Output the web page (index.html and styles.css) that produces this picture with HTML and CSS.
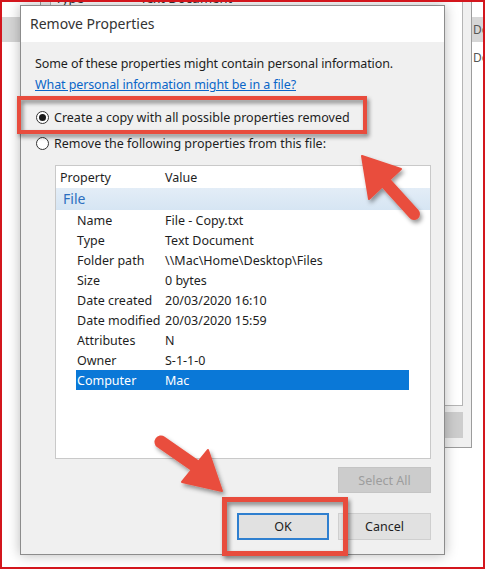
FILE: index.html
```html
<!DOCTYPE html>
<html lang="en">
<head>
  <meta charset="utf-8" />
  <meta name="viewport" content="width=device-width, initial-scale=1" />
  <title>Remove Properties</title>
  <link rel="stylesheet" href="styles.css">
</head>
<body>
  <div class="screen">
    <!-- windows lying behind the dialog -->
    <div class="far-band"></div>
    <div class="far-text far-text-1">Do</div>
    <div class="far-text far-text-2">Do</div>
    <div class="behind">
      <div class="behind-list">
        <div class="behind-row"><span>Type</span><span>Text Document</span></div>
      </div>
      <div class="behind-btn"></div>
    </div>

    <div class="dialog">
      <div class="titlebar">Remove Properties</div>
      <div class="content">
        <p class="intro">Some of these properties might contain personal information.<br>
          <a href="#">What personal information might be in a file?</a></p>

        <div class="radio"><span class="dot checked"></span>Create a copy with all possible properties removed</div>
        <div class="radio"><span class="dot"></span>Remove the following properties from this file:</div>

        <div class="listbox">
          <div class="list-head"><span>Property</span><span>Value</span></div>
          <div class="group">File</div>
          <div class="item"><span>Name</span><span>File - Copy.txt</span></div>
          <div class="item"><span>Type</span><span>Text Document</span></div>
          <div class="item"><span>Folder path</span><span>\\Mac\Home\Desktop\Files</span></div>
          <div class="item"><span>Size</span><span>0 bytes</span></div>
          <div class="item"><span>Date created</span><span>20/03/2020 16:10</span></div>
          <div class="item"><span>Date modified</span><span>20/03/2020 15:59</span></div>
          <div class="item"><span>Attributes</span><span>N</span></div>
          <div class="item"><span>Owner</span><span>S-1-1-0</span></div>
          <div class="item selected"><span>Computer</span><span>Mac</span></div>
        </div>

        <div class="btn-row select-row">
          <button class="btn disabled">Select All</button>
        </div>
        <div class="btn-row action-row">
          <button class="btn default">OK</button>
          <button class="btn">Cancel</button>
        </div>
      </div>
    </div>

    <!-- red annotations -->
    <div class="mark mark-radio"></div>
    <div class="mark mark-ok"></div>
    <svg class="arrows" width="485" height="569" viewBox="0 0 485 569">
      <defs>
        <filter id="shade" x="-20%" y="-20%" width="140%" height="140%">
          <feDropShadow dx="2" dy="3" stdDeviation="2" flood-color="#000" flood-opacity="0.4" />
        </filter>
      </defs>
      <g filter="url(#shade)" fill="#e94e3e" stroke="#e94e3e" stroke-linecap="round" stroke-linejoin="round">
        <line x1="385" y1="182" x2="414" y2="214" stroke-width="12" />
        <polygon points="362,156 401,169 369,199" stroke-width="2" />
        <line x1="197" y1="467" x2="161" y2="442" stroke-width="13" />
        <polygon points="222,491 208,450 182,482" stroke-width="2" />
      </g>
    </svg>
  </div>
</body>
</html>
```

FILE: styles.css
```css
body {
  margin: 0;
  background: #fff;
  font-family: "Noto Sans", sans-serif;
  color: #1e1e1e;
}
.screen {
  position: relative;
  width: 485px;
  height: 569px;
  overflow: hidden;
  background: #fff;
}
/* red frame round the whole screenshot */
.screen::after {
  content: "";
  position: absolute;
  inset: 0;
  border: 2px solid #d3161d;
  pointer-events: none;
}

/* background windows */
.far-band {
  position: absolute;
  left: 0;
  right: 0;
  top: 17px;
  height: 25px;
  background: #d6d6d6;
}
.far-text {
  position: absolute;
  left: 473px;
  font-size: 12px;
  color: #555;
}
.far-text-1 { top: 21px; }
.far-text-2 { top: 49px; }
.behind {
  position: absolute;
  left: 40px;
  top: -200px;
  width: 432px;
  height: 648px;
  box-sizing: border-box;
  background: #f0f0f0;
  border: 1px solid #9c9c9c;
}
.behind-list {
  position: absolute;
  left: 9px;
  right: 8px;
  top: 0;
  height: 603px;
  background: #fff;
  border: 1px solid #b5b5b5;
}
.behind-row {
  position: absolute;
  left: 4px;
  top: 187px;
  display: flex;
  gap: 56px;
  font-size: 13px;
  color: #333;
}
.behind-btn {
  position: absolute;
  right: 8px;
  top: 611px;
  width: 80px;
  height: 26px;
  background: #cdcdcd;
}

/* dialog */
.dialog {
  position: absolute;
  left: 20px;
  top: 5px;
  width: 425px;
  height: 550px;
  box-sizing: border-box;
  border: 1px solid #8c8c8c;
  background: #f0f0f0;
  box-shadow: 0 0 12px rgba(0,0,0,0.28);
  display: flex;
  flex-direction: column;
}
.titlebar {
  height: 36px;
  background: #fff;
  font-size: 14px;
  color: #333;
  padding-left: 9px;
  line-height: 36px;
}
.content {
  flex: 1;
  display: flex;
  flex-direction: column;
  padding: 11px 13px 0 14px;
  font-size: 12.5px;
}
.intro {
  margin: 0;
  line-height: 21px;
  letter-spacing: -0.1px;
}
.intro a {
  color: #0a66c8;
}
.radio {
  display: flex;
  align-items: center;
  height: 26px;
  gap: 5px;
}
.radio:first-of-type {
  margin-top: 9px;
}
.dot {
  width: 11px;
  height: 11px;
  margin-left: 1px;
  border: 1px solid #333;
  border-radius: 50%;
  background: #fff;
  display: flex;
  align-items: center;
  justify-content: center;
}
.dot.checked::after {
  content: "";
  width: 7px;
  height: 7px;
  border-radius: 50%;
  background: #1a1a1a;
}

/* property list */
.listbox {
  margin: 9px 0 0 20px;
  height: 294px;
  box-sizing: border-box;
  background: #fff;
  border: 1px solid #c9c9c9;
}
.list-head {
  display: grid;
  grid-template-columns: 105px 1fr;
  height: 22px;
  align-items: center;
  padding-left: 4px;
}
.group {
  height: 22px;
  line-height: 22px;
  padding-left: 7px;
  font-size: 14px;
  color: #2c6fc0;
  background: linear-gradient(#e3edf7, #d6e5f3);
}
.item {
  display: grid;
  grid-template-columns: 88px 1fr;
  height: 20px;
  align-items: center;
  margin: 0 21px 0 20px;
  padding-left: 1px;
}
.item.selected {
  background: #0a78d7;
  color: #fff;
}

/* buttons */
.btn-row {
  display: flex;
  justify-content: flex-end;
  gap: 9px;
}
.select-row { margin-top: 8px; }
.action-row { margin-top: 20px; }
.btn {
  width: 93px;
  height: 27px;
  font-family: inherit;
  font-size: 12.5px;
  color: #1e1e1e;
  background: #e1e1e1;
  border: 1px solid #cfcfcf;
}
.btn.disabled {
  height: 26px;
  background: #cccccc;
  border-color: #c4c4c4;
  color: #9d9d9d;
}
.btn.default {
  width: 92px;
  border: 2px solid #2f7fcf;
}

/* annotations */
.mark {
  position: absolute;
  box-sizing: border-box;
  border: 4px solid #e84c3d;
  filter: drop-shadow(2px 3px 2px rgba(0,0,0,0.45));
}
.mark-radio {
  left: 17px;
  top: 96px;
  width: 350px;
  height: 38px;
}
.mark-ok {
  left: 222px;
  top: 497px;
  width: 126px;
  height: 59px;
  border-width: 5px;
}
.arrows {
  position: absolute;
  left: 0;
  top: 0;
  pointer-events: none;
}
```
